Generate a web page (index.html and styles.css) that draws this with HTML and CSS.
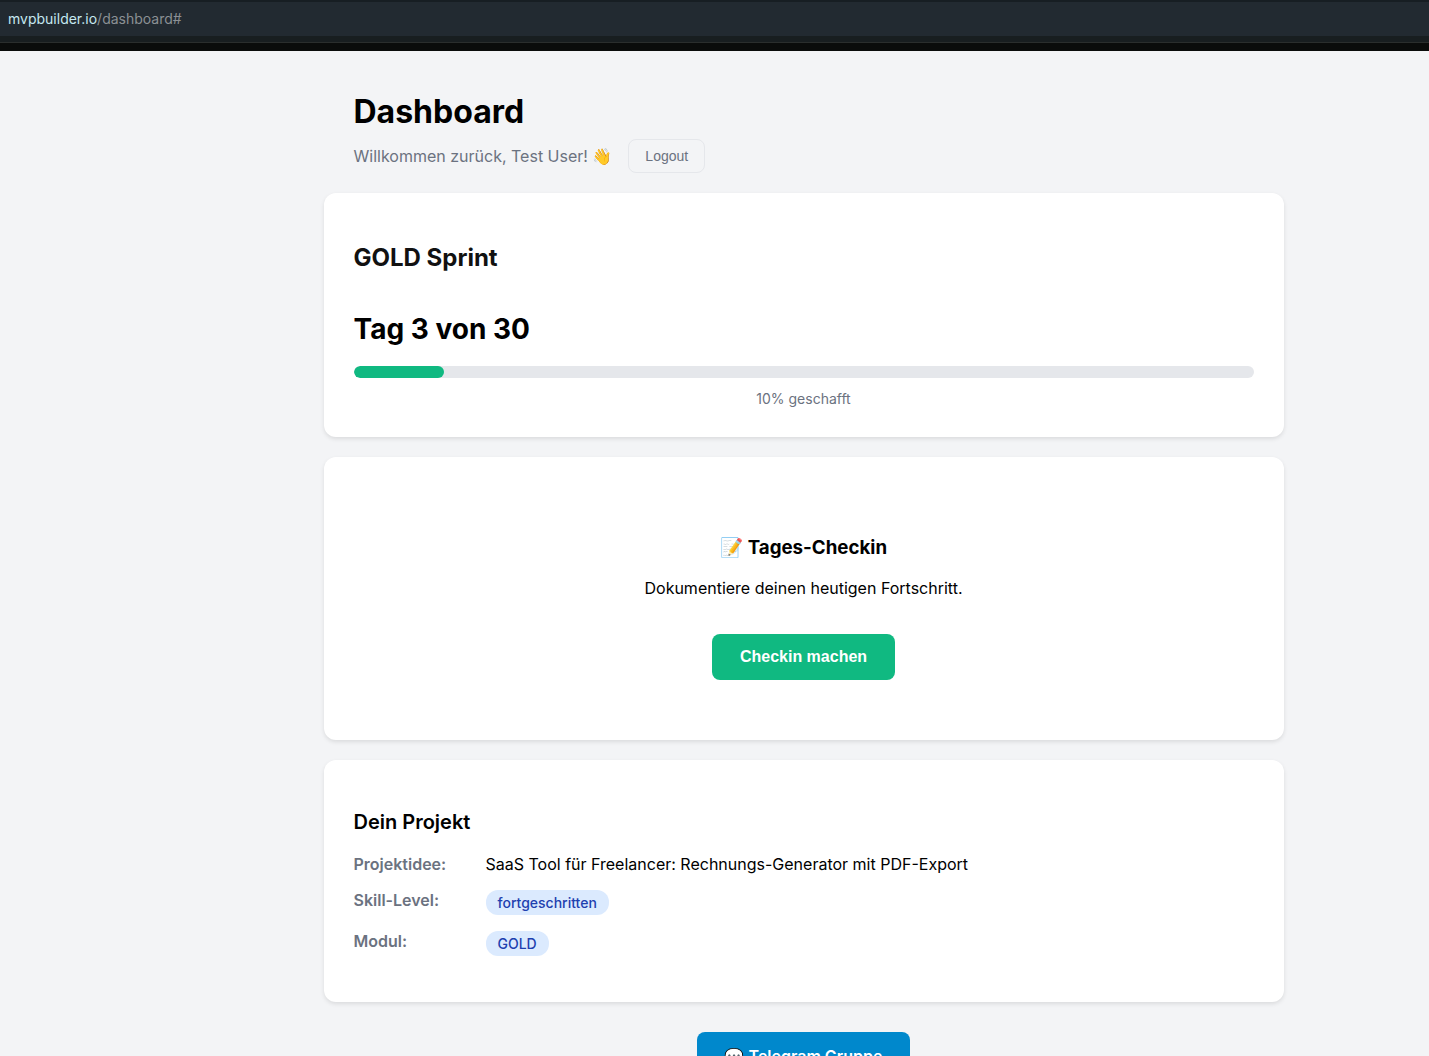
FILE: index.html
```
<!DOCTYPE html>
<html lang="de">
  <head>
    <meta charset="UTF-8" />
    <meta name="viewport" content="width=device-width, initial-scale=1.0" />
    <title>Dashboard</title>
    <link rel="stylesheet" href="styles.css">
  </head>
  <body>
    <div class="address-bar">
      <div class="address"><span class="host">mvpbuilder.io</span>/dashboard#</div>
      <div class="toolbar"></div>
    </div>

    <main class="page">
      <div class="container">
        <header class="header">
          <h1>Dashboard</h1>
          <div class="welcome">
            <p>Willkommen zurück, Test User! 👋</p>
            <button type="button" class="logout-button">Logout</button>
          </div>
        </header>

        <section class="card">
          <h2>GOLD Sprint</h2>
          <div class="day">Tag 3 von 30</div>
          <div class="progress-bar">
            <div class="progress-fill" style="width: 10%"></div>
          </div>
          <p class="progress-text">10% geschafft</p>
        </section>

        <section class="card checkin">
          <h3>📝 Tages-Checkin</h3>
          <p>Dokumentiere deinen heutigen Fortschritt.</p>
          <button type="button" class="checkin-button">Checkin machen</button>
        </section>

        <section class="card project">
          <h3>Dein Projekt</h3>
          <dl>
            <div class="row">
              <dt>Projektidee:</dt>
              <dd>SaaS Tool für Freelancer: Rechnungs-Generator mit PDF-Export</dd>
            </div>
            <div class="row">
              <dt>Skill-Level:</dt>
              <dd><span class="badge">fortgeschritten</span></dd>
            </div>
            <div class="row">
              <dt>Modul:</dt>
              <dd><span class="badge">GOLD</span></dd>
            </div>
          </dl>
        </section>

        <div class="footer">
          <a href="#" class="telegram-button">💬 Telegram Gruppe</a>
        </div>
      </div>
    </main>
  </body>
</html>
```
FILE: styles.css
```
* {
  margin: 0;
  padding: 0;
  box-sizing: border-box;
}

body {
  font-family: Inter, "Noto Color Emoji", sans-serif;
  font-size: 16px;
  background: #f3f4f6;
  color: #000;
}

/* Address bar */
.address-bar {
  background: #0a0c0b;
  border-top: 2px solid #171e23;
  padding-bottom: 8px;
}

.address {
  background: #222a31;
  color: #8b9094;
  padding: 0 8px;
  font-size: 14px;
  line-height: 34px;
}

.toolbar {
  height: 7px;
  background: #181e20;
  border-bottom: 1px solid #2a2e2d;
}

.host {
  color: #c5e8f0;
}

.page {
  padding: 40px 0 30px 178px;
}

.container {
  max-width: 960px;
  margin: 0 auto;
}

.header {
  padding: 0 30px 20px;
}

.header h1 {
  font-size: 32px;
  line-height: 42px;
  margin-bottom: 6px;
}

.welcome {
  display: flex;
  align-items: center;
  gap: 16px;
  color: #6b7280;
}

.logout-button {
  padding: 8px 16px;
  border: 1px solid #e5e7eb;
  border-radius: 8px;
  background: transparent;
  color: #6b7280;
  font-family: "Liberation Sans", Arial, sans-serif;
  font-size: 14px;
  line-height: 16px;
  cursor: pointer;
}

.card {
  background: white;
  border-radius: 12px;
  padding: 30px;
  margin-bottom: 20px;
  box-shadow: 0 2px 4px rgba(0, 0, 0, 0.1);
}

.card h2 {
  margin: 20px 0 39px;
  color: #111;
  font-size: 24px;
  font-weight: 700;
  line-height: 30px;
}

.day {
  font-size: 28px;
  font-weight: 700;
  line-height: 34px;
  margin-bottom: 20px;
}

.progress-bar {
  height: 12px;
  background: #e5e7eb;
  border-radius: 6px;
  overflow: hidden;
}

.progress-fill {
  height: 100%;
  background: #10b981;
  border-radius: 6px;
}

.progress-text {
  margin-top: 12px;
  color: #6b7280;
  font-size: 14px;
  line-height: 17px;
  text-align: center;
}

.checkin {
  padding: 60px 30px;
  text-align: center;
}

.checkin h3 {
  margin: 19px 0;
  line-height: 23px;
}

.checkin p {
  line-height: 20px;
  margin-bottom: 36px;
}

.checkin-button {
  padding: 14px 28px;
  border: none;
  border-radius: 8px;
  background: #10b981;
  color: white;
  font-family: "Liberation Sans", Arial, sans-serif;
  font-size: 16px;
  font-weight: 600;
  line-height: 18px;
  vertical-align: top;
  cursor: pointer;
}

.project h3 {
  margin: 20px 0 12px;
  font-size: 20px;
  font-weight: 600;
  line-height: 24px;
}

.project dl {
  margin-bottom: 8px;
}

.row {
  display: flex;
  gap: 12px;
  padding: 8px 0;
  line-height: 20px;
}

.row dt {
  width: 120px;
  color: #6b7280;
  font-weight: 600;
}

.badge {
  display: block;
  padding: 4px 12px;
  border-radius: 12px;
  background: #dbeafe;
  color: #1e40af;
  font-size: 14px;
  font-weight: 500;
  line-height: 17px;
}

.footer {
  padding-top: 10px;
  text-align: center;
}

.telegram-button {
  display: inline-block;
  padding: 14px 28px;
  border-radius: 8px;
  background: #0088cc;
  color: white;
  font-weight: 600;
  line-height: 20px;
  text-decoration: none;
}
```
